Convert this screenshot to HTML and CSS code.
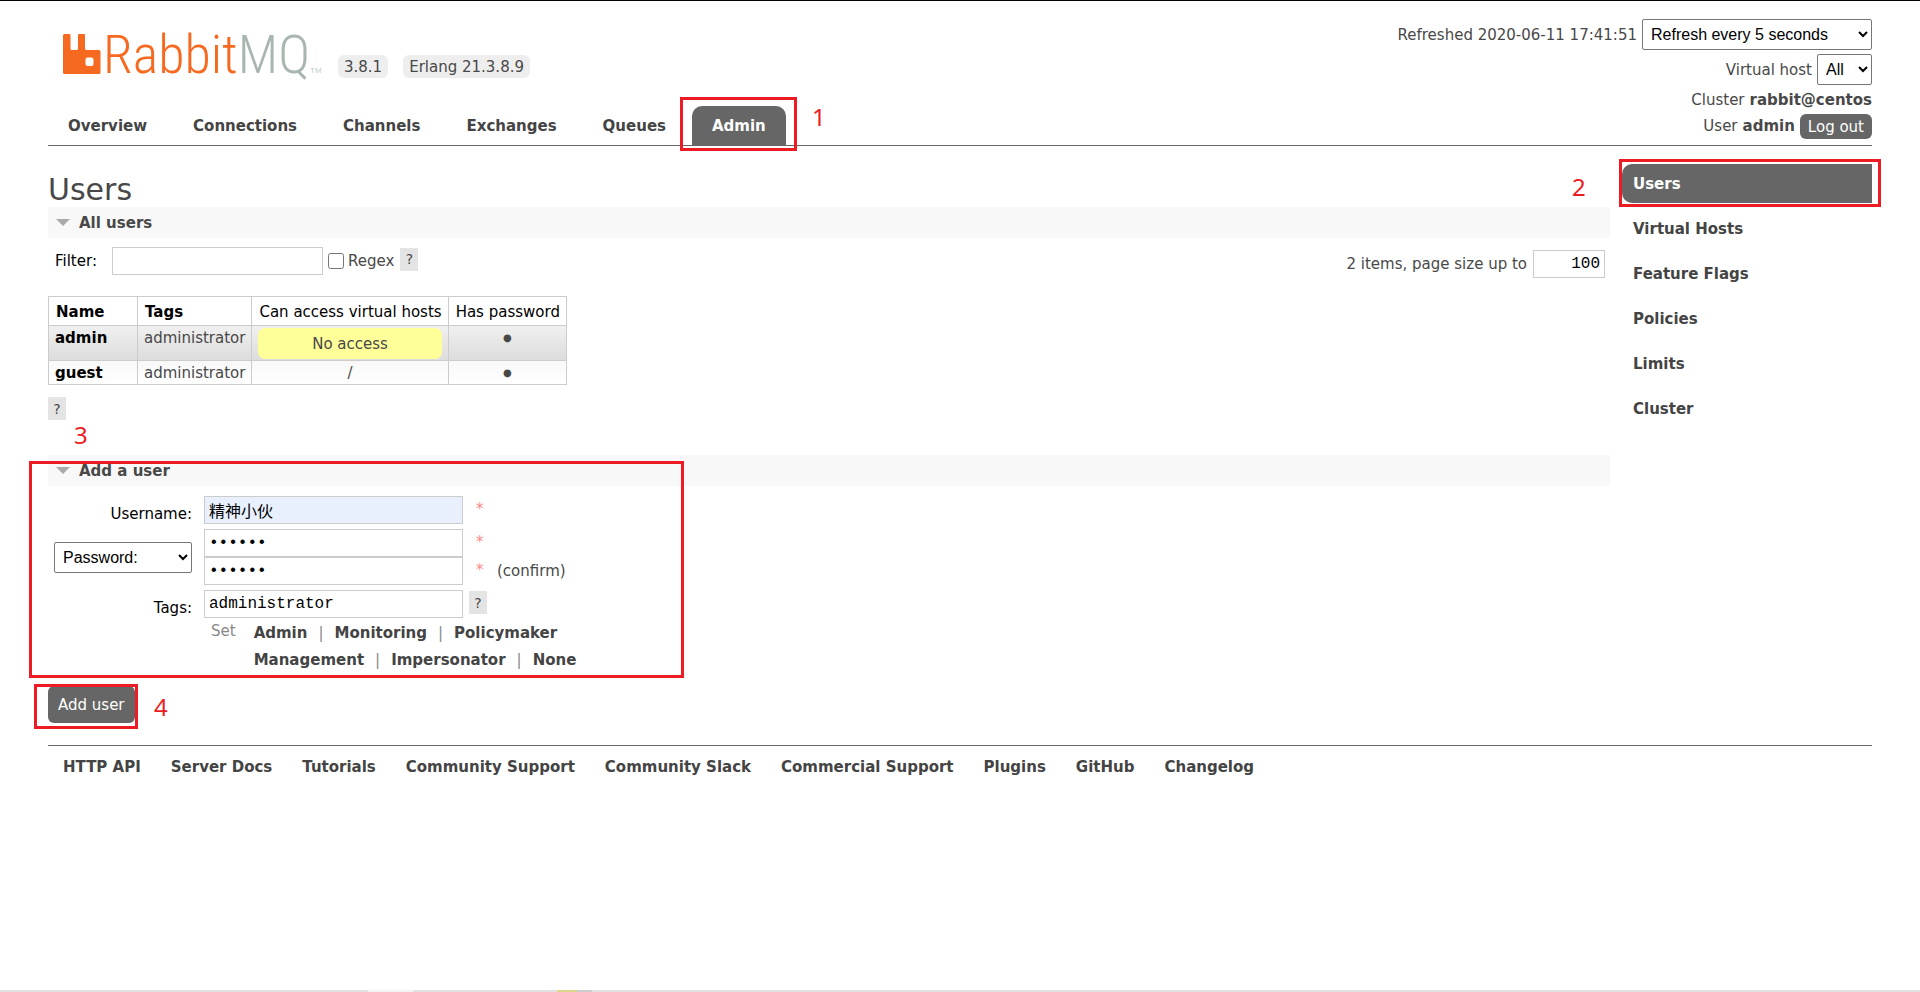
FILE: index.html
```
<!DOCTYPE html>
<html lang="en">

<head>
  <meta charset="UTF-8">
  <title>RabbitMQ Management</title>
  <link rel="stylesheet" href="styles.css">
</head>

<body>
  <div class="page">
    <header class="header">
      <div class="header-left">
        <div class="brand">
          <a class="logo" href="#" aria-label="RabbitMQ">
            <svg class="logo-mark" width="38" height="42" viewBox="0 0 38 42">
              <path fill="#f66920" fill-rule="evenodd" d="M1.500 1H6.500Q7.500 1 7.500 2V15.500Q7.500 17 9 17H13.500Q15 17 15 15.500V2Q15 1 16 1H21Q22 1 22 2V15.500Q22 17 23.500 17H36Q37.500 17 37.500 18.500V39.500Q37.500 41 36 41H1.500Q0 41 0 39.500V2.500Q0 1 1.500 1ZM24.500 24.500Q22.500 24.500 22.500 26.500V31Q22.500 33 24.500 33H28.500Q30.500 33 30.500 31V26.500Q30.500 24.500 28.500 24.500Z"/>
            </svg>
            <span class="logo-text">Rabbit<span class="logo-mq">MQ</span></span>
            <span class="logo-tm">TM</span>
          </a>
          <span class="version">3.8.1</span>
          <span class="version">Erlang 21.3.8.9</span>
        </div>
        <nav class="tabs">
          <a href="#">Overview</a>
          <a href="#">Connections</a>
          <a href="#">Channels</a>
          <a href="#">Exchanges</a>
          <a href="#">Queues</a>
          <a href="#" class="selected">Admin<span class="mark mark-tab"></span><span class="num num-tab">1</span></a>
        </nav>
      </div>
      <div class="login">
        <div class="login-row">
          <label for="refresh">Refreshed 2020-06-11 17:41:51</label>
          <select id="refresh" class="select-refresh">
            <option>Refresh every 5 seconds</option>
          </select>
        </div>
        <div class="login-row">
          <label for="vhost">Virtual host</label>
          <select id="vhost" class="select-vhost">
            <option>All</option>
          </select>
        </div>
        <div class="login-row login-text">Cluster <b>rabbit@centos</b></div>
        <div class="login-row login-text">User <b>admin</b> <button type="button" class="logout">Log out</button></div>
      </div>
    </header>

    <div class="content">
      <main class="main">
        <h1>Users</h1>

        <section class="section">
          <h2>All users</h2>
          <div class="filter">
            <div class="filter-left">
              <label class="filter-label" for="filter">Filter:</label>
              <input type="text" id="filter" class="filter-input">
              <input type="checkbox" id="regex" class="checkbox">
              <label for="regex">Regex</label>
              <button type="button" class="help">?</button>
            </div>
            <div class="filter-right">
              <label for="pagesize">2 items, page size up to</label>
              <input type="text" id="pagesize" class="pagesize" value="100">
            </div>
          </div>
          <table class="list">
            <thead>
              <tr>
                <th class="sort">Name</th>
                <th class="sort">Tags</th>
                <th>Can access virtual hosts</th>
                <th>Has password</th>
              </tr>
            </thead>
            <tbody>
              <tr class="alt1">
                <td class="name">admin</td>
                <td>administrator</td>
                <td class="c"><p class="warning">No access</p></td>
                <td class="c dot">●</td>
              </tr>
              <tr class="alt2">
                <td class="name">guest</td>
                <td>administrator</td>
                <td class="c">/</td>
                <td class="c dot">●</td>
              </tr>
            </tbody>
          </table>
          <button type="button" class="help">?</button>
        </section>

        <section class="section section-add">
          <h2>Add a user</h2>
          <span class="mark mark-form"></span>
          <span class="num num-form">3</span>
          <form class="form">
            <label class="form-label" for="username">Username:</label>
            <div class="field">
              <input type="text" id="username" class="autofill" value="精神小伙">
              <span class="mand">*</span>
            </div>

            <select class="select-password" aria-label="Password type">
              <option>Password:</option>
            </select>
            <div class="passwords">
              <div class="field">
                <input type="password" value="123456" aria-label="Password">
                <span class="mand">*</span>
              </div>
              <div class="field">
                <input type="password" value="123456" aria-label="Confirm password">
                <span class="mand">*</span>
                <span class="confirm">(confirm)</span>
              </div>
            </div>

            <label class="form-label" for="tags">Tags:</label>
            <div class="field field-tags">
              <input type="text" id="tags" value="administrator">
              <button type="button" class="help">?</button>
            </div>

            <div class="tag-set">
              <span class="set">Set</span>
              <div class="tag-links">
                <div class="tag-row"><a href="#">Admin</a><i>|</i><a href="#">Monitoring</a><i>|</i><a href="#">Policymaker</a></div>
                <div class="tag-row"><a href="#">Management</a><i>|</i><a href="#">Impersonator</a><i>|</i><a href="#">None</a></div>
              </div>
            </div>
          </form>
          <div class="submit">
            <button type="button" class="add">Add user</button>
            <span class="mark mark-add"></span>
            <span class="num num-add">4</span>
          </div>
        </section>
      </main>

      <nav class="side">
        <a href="#" class="selected">Users<span class="mark mark-side"></span><span class="num num-side">2</span></a>
        <a href="#">Virtual Hosts</a>
        <a href="#">Feature Flags</a>
        <a href="#">Policies</a>
        <a href="#">Limits</a>
        <a href="#">Cluster</a>
      </nav>
    </div>

    <footer class="footer">
      <a href="#">HTTP API</a>
      <a href="#">Server Docs</a>
      <a href="#">Tutorials</a>
      <a href="#">Community Support</a>
      <a href="#">Community Slack</a>
      <a href="#">Commercial Support</a>
      <a href="#">Plugins</a>
      <a href="#">GitHub</a>
      <a href="#">Changelog</a>
    </footer>
  </div>
  <div class="strip"><span class="strip-light"></span><span class="strip-yellow"></span><span class="strip-dark"></span></div>
</body>

</html>
```

FILE: styles.css
```
* {
  box-sizing: border-box;
}

body {
  margin: 0;
  min-height: 100vh;
  display: flex;
  flex-direction: column;
  justify-content: space-between;
  border-top: 1px solid #000;
  background: #fff;
  color: #484848;
  font: 15px/20px Verdana, "DejaVu Sans", sans-serif;
}

a {
  color: #444;
  font-weight: bold;
  text-decoration: none;
}

.page {
  padding: 0 48px;
}

/* header */
.header {
  display: flex;
  justify-content: space-between;
  border-bottom: 1px solid #666;
}

.header-left {
  display: flex;
  flex-direction: column;
  justify-content: space-between;
}

.brand {
  display: flex;
  align-items: flex-end;
  padding: 31px 0 0 15px;
}

.logo {
  display: flex;
  align-items: flex-end;
  width: 254px;
  height: 43px;
  margin-right: 21px;
}

.logo-mark {
  flex: none;
}

.logo-text {
  margin-left: 2px;
  color: #f66920;
  font: 300 54px/41px "Roboto Condensed", "Open Sans Condensed", "Liberation Sans Narrow", sans-serif;
}

.logo-mq {
  color: #a9b6af;
}

.logo-tm {
  color: #c4ccc8;
  font: 8px/8px "Liberation Sans", sans-serif;
}

.version {
  margin: 0 15px -3px 0;
  padding: 2px 6px 1px;
  border-radius: 6px;
  background: #eee;
}

.tabs {
  display: flex;
  gap: 6px;
}

.tabs a {
  position: relative;
  padding: 10px 20px 9px;
}

.tabs .selected {
  border-radius: 10px 10px 0 0;
  background: #666;
  color: #fff;
}

.login {
  display: flex;
  flex-direction: column;
  align-items: flex-end;
  gap: 4px;
  padding: 18px 0 8px;
}

.login-row {
  display: flex;
  align-items: center;
  gap: 5px;
}

.login-text {
  height: 22px;
}

select {
  height: 31px;
  padding: 0 4px;
  border: 1px solid #767676;
  border-radius: 2px;
  background: #fff;
  color: #000;
  font: 16px "Liberation Sans", sans-serif;
}

.select-refresh {
  width: 230px;
}

.select-vhost {
  width: 55px;
}

button {
  border: 0;
  font: 15px/20px Verdana, "DejaVu Sans", sans-serif;
}

.logout {
  padding: 3px 8px 2px;
  border-radius: 6px;
  background: #666;
  color: #fff;
}

/* content */
.content {
  display: flex;
  gap: 12px;
  padding-top: 18px;
}

.main {
  flex: 1;
}

h1 {
  margin: 8px 0 0;
  font-size: 30px;
  line-height: 35px;
  font-weight: normal;
}

h2 {
  display: flex;
  align-items: center;
  gap: 9px;
  height: 31px;
  margin: 0;
  padding-left: 8px;
  background: #f8f8f8;
  font-size: 15px;
}

h2::before {
  content: "";
  border: 7px solid transparent;
  border-top-color: #aaa;
  border-bottom: 0;
}

input {
  height: 28px;
  padding: 0 4px;
  border: 1px solid #ccc;
  background: #fff;
  color: #000;
  font: 16px "Liberation Mono", "Noto Sans CJK SC", monospace;
}

.filter {
  display: flex;
  justify-content: space-between;
  padding: 9px 5px 18px 7px;
}

.filter-left {
  display: flex;
  align-items: center;
  height: 28px;
}

.filter-right {
  display: flex;
  align-items: center;
  gap: 6px;
  padding-top: 3px;
}

.filter-label {
  width: 57px;
  color: #000;
}

.filter-input {
  width: 211px;
}

.checkbox {
  width: 16px;
  height: 16px;
  margin: 0 4px 0 5px;
}

.pagesize {
  width: 72px;
  text-align: right;
}

.help {
  width: 18px;
  height: 23px;
  padding: 0;
  background: #e4e4e4;
  color: #484848;
  font-size: 14px;
}

.filter .help {
  margin: 0 0 4px 6px;
}

.list {
  margin-bottom: 12px;
  border-collapse: collapse;
}

.list th,
.list td {
  padding: 2px 6px 1px;
  border: 1px solid #ccc;
  text-align: left;
  vertical-align: top;
}

.list th {
  padding: 5px 6px 3px 7px;
  color: #000;
  font-weight: normal;
}

.list .sort {
  font-weight: bold;
}

.list .sort:first-child {
  min-width: 89px;
}

.list .name {
  color: #000;
  font-weight: bold;
}

.list .c {
  text-align: center;
}

.list .dot {
  font-size: 10px;
}

.list .warning {
  margin: 0;
  padding: 6px 5px 5px;
  border-radius: 7px;
  background: #ff9;
}

.alt1 {
  background: linear-gradient(#f0f0f0, #dcdcdc);
}

.alt2 {
  background: linear-gradient(#f8f8f8, #fff);
}

/* add user */
.section-add {
  position: relative;
  margin-top: 35px;
}

.form {
  display: grid;
  grid-template-columns: 138px 1fr;
  column-gap: 12px;
  row-gap: 5px;
  padding: 10px 0 0 6px;
}

.form-label {
  padding-top: 8px;
  color: #000;
  text-align: right;
}

.field {
  display: flex;
  height: 28px;
}

.field input {
  width: 259px;
}

.field .autofill {
  background: #e8f0fe;
}

.mand {
  width: 10px;
  margin-left: 13px;
  padding-top: 3px;
  color: #f88;
}

.confirm {
  margin-left: 11px;
  padding-top: 4px;
}

.select-password {
  align-self: center;
  width: 138px;
}

.field-tags .help {
  margin: 1px 0 0 6px;
}

.tag-set {
  grid-column: 2;
  display: flex;
  gap: 18px;
  padding-left: 7px;
}

.set {
  color: #888;
  line-height: 16px;
}

.tag-row {
  display: flex;
  gap: 11px;
  height: 27px;
}

.tag-row i {
  color: #888;
  font-style: normal;
}

.submit {
  position: relative;
  padding-top: 9px;
}

.add {
  padding: 9px 10px 8px;
  border-radius: 6px;
  background: #666;
  color: #fff;
}

/* side menu */
.side {
  display: flex;
  flex-direction: column;
  gap: 6px;
  width: 250px;
}

.side a {
  position: relative;
  padding: 10px 11px 9px;
}

.side .selected {
  border-radius: 10px 0 0 10px;
  background: #666;
  color: #fff;
}

.footer {
  display: flex;
  gap: 30px;
  margin-top: 22px;
  padding: 11px 15px;
  border-top: 1px solid #666;
}

/* red guide boxes and step numbers */
.mark {
  position: absolute;
  border: 3px solid #ed1c24;
  pointer-events: none;
}

.num {
  position: absolute;
  color: #ed1c24;
  font: 24px/24px "Noto Sans", sans-serif;
}

.mark-tab {
  inset: -9px -11px -6px -12px;
}

.num-tab {
  top: -1px;
  right: -40px;
}

.mark-side {
  inset: -5px -9px -4px -3px;
}

.num-side {
  top: 11px;
  left: -50px;
}

.mark-form {
  top: 6px;
  left: -19px;
  width: 655px;
  height: 217px;
}

.num-form {
  top: -32px;
  left: 26px;
}

.mark-add {
  top: 7px;
  left: -14px;
  width: 104px;
  height: 45px;
}

.num-add {
  top: 18px;
  left: 106px;
}

.strip {
  display: flex;
  height: 2px;
  background: #e1e1e1;
}

.strip-light {
  width: 45px;
  margin: 0 144px 0 368px;
  background: #f4f4f4;
}

.strip-yellow {
  width: 20px;
  background: #ddd68a;
}

.strip-dark {
  width: 15px;
  background: #ccc;
}
```
